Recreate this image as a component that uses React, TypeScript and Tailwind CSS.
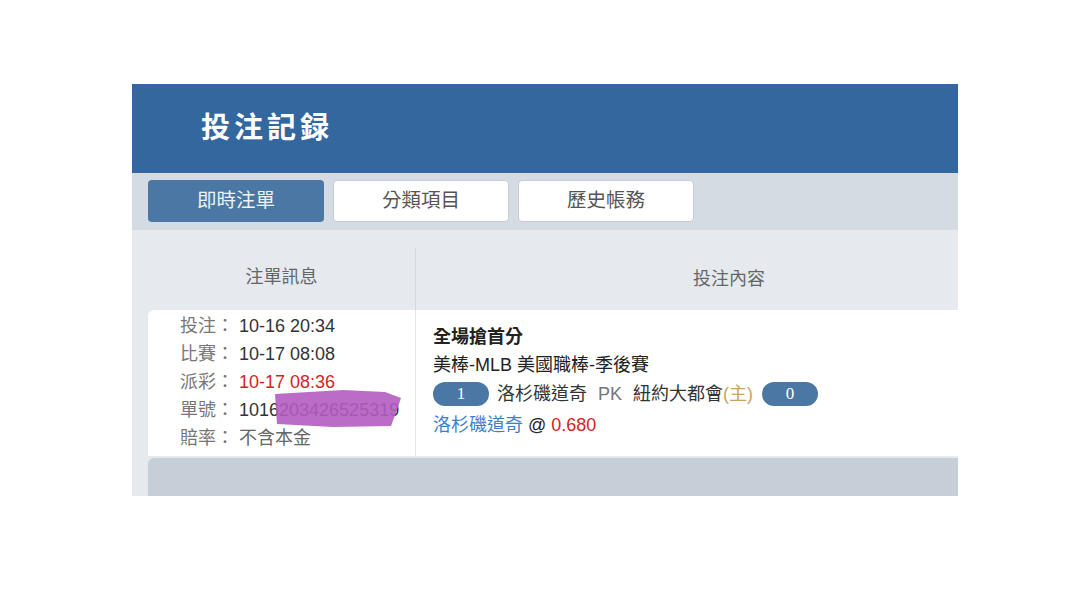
import React from 'react';

const sans = "font-['Liberation_Sans','Noto_Sans_CJK_TC',sans-serif]";

const infoRows = [
  { label: '投注', value: '10-16 20:34', red: false },
  { label: '比賽', value: '10-17 08:08', red: false },
  { label: '派彩', value: '10-17 08:36', red: true },
  { label: '單號', value: '1016203426525319', red: false },
];

const Pill = ({ n }: { n: string }) => (
  <span className="inline-flex h-[24px] w-[56px] items-center justify-center rounded-full bg-[#4a77a3] font-['Liberation_Serif',serif] text-[17px] text-white">
    {n}
  </span>
);

const App = () => {
  return (
    <div className={`min-h-[608px] w-[1080px] bg-white pl-[132px] pt-[84px] ${sans}`}>
      <div className="w-[826px] overflow-hidden">
        <div className="flex h-[89px] items-center bg-[#33679e] pl-[69px]">
          <h1 className="text-[29px] font-bold tracking-[4px] text-white">投注記録</h1>
        </div>

        <div className="flex h-[57px] gap-[9px] bg-[#d4dbe3] pl-[16px] pt-[7px]">
          <button className="h-[42px] w-[176px] rounded-[4px] bg-[#4a77a3] text-[19.5px] text-[#eef3f8]">
            即時注單
          </button>
          <button className="h-[42px] w-[176px] rounded-[4px] border border-[#c6ccd3] bg-white text-[19.5px] text-[#555]">
            分類項目
          </button>
          <button className="h-[42px] w-[176px] rounded-[4px] border border-[#c6ccd3] bg-white text-[19.5px] text-[#555]">
            歷史帳務
          </button>
        </div>

        <div className="w-[910px] bg-[#e6eaef] pl-[16px]">
          <div className="flex h-[80px] text-[18px] text-[#666]">
            <div className="flex w-[267px] items-center justify-center pt-[14px]">注單訊息</div>
            <div className="mt-[18px] flex flex-1 items-center justify-center border-l border-[#d4d9df]">
              投注內容
            </div>
          </div>

          <div className="flex h-[146px] rounded-tl-[6px] bg-white">
            <div className="relative w-[267px] pl-[32px] pt-[2px] text-[18px] leading-[28px]">
              {infoRows.map((r) => (
                <div key={r.label} className="flex">
                  <span className="w-[59px] text-[#777]">{r.label}：</span>
                  <span className={r.red ? 'text-[#d81e1e]' : 'text-[#333]'}>{r.value}</span>
                </div>
              ))}
              <div className="flex">
                <span className="w-[59px] text-[#777]">賠率：</span>
                <span className="text-[#666]">不含本金</span>
              </div>
              <svg className="absolute left-[125px] top-[78px]" width="132" height="42" viewBox="0 0 132 42">
                <path
                  d="M2 6 L70 2 L112 4 L128 10 L124 22 L118 38 L60 39 L4 36 Z"
                  fill="#b25cc0"
                  fillOpacity="0.9"
                />
              </svg>
            </div>
            <div className="flex-1 border-l border-[#e0e4e8] pl-[17px] pt-[13px] text-[18px] leading-[28px] text-[#222]">
              <div className="font-bold">全場搶首分</div>
              <div>美棒-MLB 美國職棒-季後賽</div>
              <div className="flex h-[30px] items-center">
                <Pill n="1" />
                <span className="ml-[8px] text-[#333]">洛杉磯道奇</span>
                <span className="ml-[11px] text-[#777]">PK</span>
                <span className="ml-[11px] text-[#333]">
                  紐約大都會<span className="text-[#c9a26a]">(主)</span>
                </span>
                <span className="ml-[9px] flex">
                  <Pill n="0" />
                </span>
              </div>
              <div className="mt-[2px]">
                <span className="text-[#3d7fcc]">洛杉磯道奇</span>
                <span className="text-[#222]"> @ </span>
                <span className="text-[#d81e1e]">0.680</span>
              </div>
            </div>
          </div>

          <div className="mt-[2px] h-[38px] rounded-tl-[6px] bg-[#c6ced7]" />
        </div>
      </div>
    </div>
  );
};

export default App;
